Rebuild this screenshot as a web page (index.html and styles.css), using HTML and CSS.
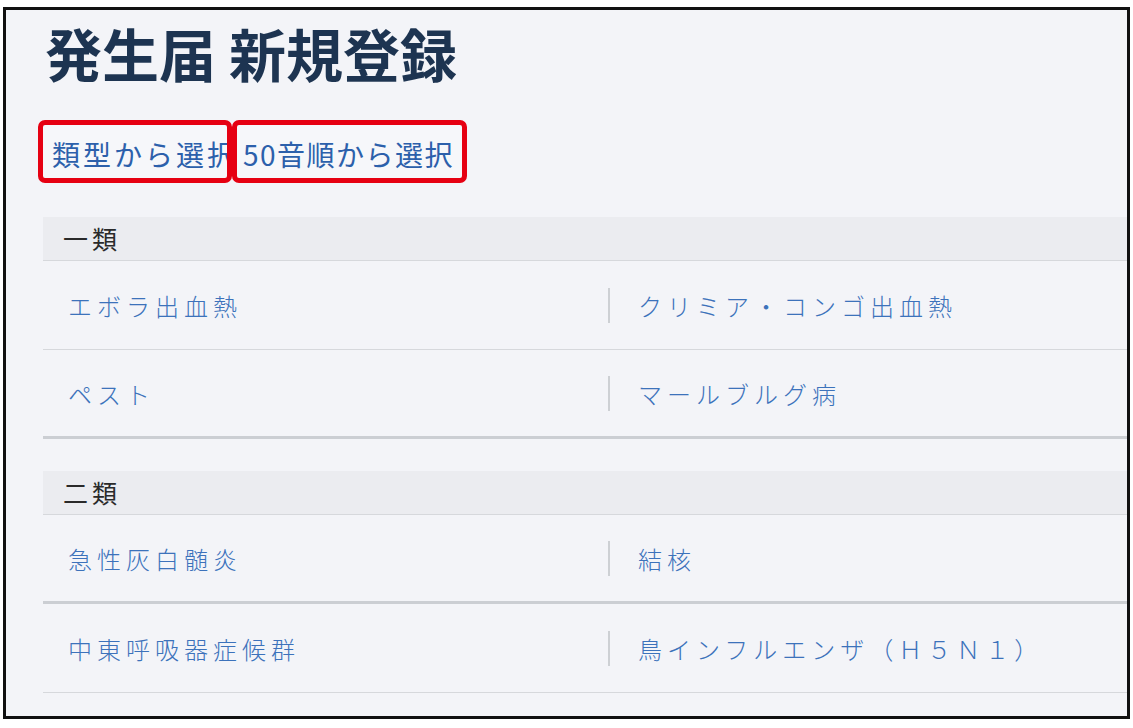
FILE: index.html
```html
<!DOCTYPE html>
<html>

<head>
    <title>発生届 新規登録</title>
    <meta charset="utf-8">
    <link rel="stylesheet" href="styles.css">
</head>

<body>
    <div class="frame">

        <h1 class="title">発生届 新規登録</h1>

        <div class="tabs">
            <a class="tab tab-first" href="#">類型から選択</a>
            <a class="tab" href="#">50音順から選択</a>
        </div>

        <div class="section">
            <div class="section-head">一類</div>
            <div class="row">
                <div class="cell"><a href="#">エボラ出血熱</a></div>
                <div class="cell cell-right"><a href="#">クリミア・コンゴ出血熱</a></div>
            </div>
            <div class="row row-thick">
                <div class="cell"><a href="#">ペスト</a></div>
                <div class="cell cell-right"><a href="#">マールブルグ病</a></div>
            </div>
        </div>

        <div class="section">
            <div class="section-head">二類</div>
            <div class="row row-thick">
                <div class="cell"><a href="#">急性灰白髄炎</a></div>
                <div class="cell cell-right"><a href="#">結核</a></div>
            </div>
            <div class="row">
                <div class="cell"><a href="#">中東呼吸器症候群</a></div>
                <div class="cell cell-right"><a href="#">鳥インフルエンザ（Ｈ５Ｎ１）</a></div>
            </div>
        </div>

    </div>
</body>

</html>
```

FILE: styles.css
```css
body {
    margin: 0;
    background-color: #ffffff;
    font-family: "Noto Sans CJK JP", "Noto Sans", sans-serif;
}

.frame {
    box-sizing: border-box;
    width: 1127px;
    height: 712px;
    margin: 7px 0 0 3px;
    padding: 10px 0 0 37px;
    border: 3px solid #111111;
    background-color: #f3f4f8;
    overflow: hidden;
}

.title {
    margin: 0 0 35px 2px;
    font-size: 57px;
    line-height: 65px;
    font-weight: 700;
    color: #1d3451;
}

.tabs {
    display: flex;
    margin-left: -5px;
}

.tab {
    box-sizing: border-box;
    height: 63px;
    padding: 0 8px 0 6px;
    border: 5px solid #e60012;
    border-radius: 7px;
    background-color: #f6f7fa;
    font-size: 28px;
    line-height: 58px;
    letter-spacing: 1.5px;
    color: #2c60ab;
    text-decoration: none;
    white-space: nowrap;
}

.tab-first {
    width: 194px;
    padding-left: 9px;
    letter-spacing: 3px;
    overflow: hidden;
}

.section {
    margin-top: 34px;
}

.section + .section {
    margin-top: 32px;
}

.section-head {
    height: 43px;
    padding-left: 20px;
    border-bottom: 1px solid #d6d8dc;
    background-color: #ebecf0;
    font-size: 25px;
    line-height: 43px;
    letter-spacing: 4px;
    color: #2a2a2a;
}

.row {
    display: flex;
    align-items: center;
    height: 88px;
    border-bottom: 1px solid #d6d8dc;
}

.row-thick {
    height: 86px;
    border-bottom: 3px solid #cbced3;
}

.cell {
    width: 540px;
    padding-left: 25px;
}

.cell a {
    font-size: 24px;
    font-weight: 300;
    letter-spacing: 5px;
    color: #3c72bb;
    text-decoration: none;
}

.cell-right {
    width: auto;
    padding-left: 0;
}

.cell-right a {
    display: block;
    padding-left: 28px;
    border-left: 2px solid #cdd0d4;
    line-height: 35px;
}
```
